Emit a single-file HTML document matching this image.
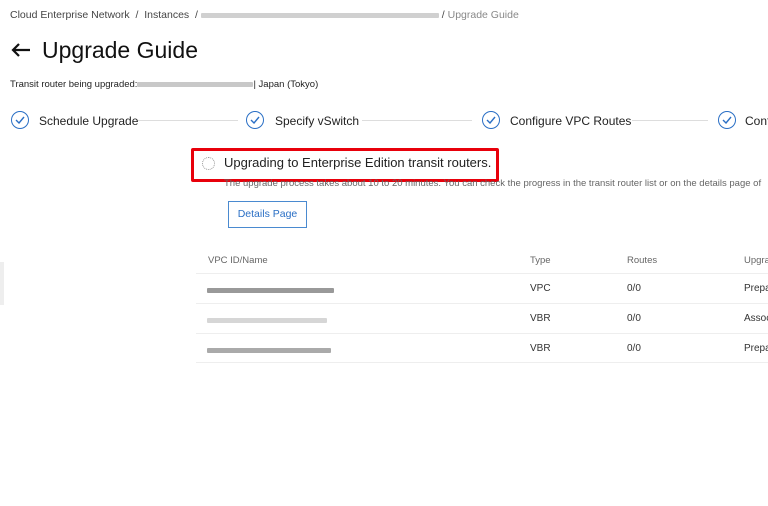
<!DOCTYPE html>
<html><head><style>
body{margin:0;width:768px;height:506px;background:#fff;font-family:"Liberation Sans",sans-serif;color:#333;position:relative;overflow:hidden}
.a{position:absolute;white-space:nowrap}
.b{display:inline-block;height:5px;background:#c8c8c8;vertical-align:middle;border-radius:1px}
.c{position:absolute;width:16px;height:16px;border:1.5px solid #2a6fc5;border-radius:50%;top:111px}
.c svg{position:absolute;left:3px;top:4px}
.ln{position:absolute;height:1px;background:#ddd;top:120px}
.row{position:absolute;left:196px;width:572px;height:1px;background:#eee}
</style></head><body>
<div class="a" style="left:10px;top:9px;font-size:10.5px;color:#444">Cloud Enterprise Network &nbsp;/&nbsp; Instances &nbsp;/ <span class="b" style="width:238px;background:#d0d0d0"></span> / <span style="color:#888">Upgrade Guide</span></div>
<svg class="a" style="left:10px;top:42px" width="22" height="16" viewBox="0 0 22 16"><path d="M20 8H3M9 2L3 8l6 6" stroke="#111" stroke-width="2.2" fill="none"/></svg>
<div class="a" style="left:42px;top:37px;font-size:23px;color:#111">Upgrade Guide</div>
<div class="a" style="left:10px;top:79px;font-size:9.5px;color:#222">Transit router being upgraded:<span class="b" style="width:116px"></span>| Japan (Tokyo)</div>
<div class="c" style="left:11px"><svg width="10" height="8"><path d="M1 4l3 3 5-6" stroke="#2a6fc5" stroke-width="1.4" fill="none"/></svg></div>
<div class="a" style="left:39px;top:114px;font-size:12px;color:#222">Schedule Upgrade</div>
<div class="ln" style="left:138px;width:100px"></div>
<div class="c" style="left:246px"><svg width="10" height="8"><path d="M1 4l3 3 5-6" stroke="#2a6fc5" stroke-width="1.4" fill="none"/></svg></div>
<div class="a" style="left:275px;top:114px;font-size:12px;color:#222">Specify vSwitch</div>
<div class="ln" style="left:362px;width:110px"></div>
<div class="c" style="left:482px"><svg width="10" height="8"><path d="M1 4l3 3 5-6" stroke="#2a6fc5" stroke-width="1.4" fill="none"/></svg></div>
<div class="a" style="left:510px;top:114px;font-size:12px;color:#222">Configure VPC Routes</div>
<div class="ln" style="left:632px;width:76px"></div>
<div class="c" style="left:718px"><svg width="10" height="8"><path d="M1 4l3 3 5-6" stroke="#2a6fc5" stroke-width="1.4" fill="none"/></svg></div>
<div class="a" style="left:745px;top:114px;font-size:12px;color:#222">Confirm</div>
<div class="a" style="left:191px;top:148px;width:302px;height:28px;border:3px solid #e8000b;border-radius:2px"></div>
<div class="a" style="left:202px;top:157px;width:11px;height:11px;border:1.5px dotted #999;border-radius:50%"></div>
<div class="a" style="left:224px;top:155px;font-size:13px;color:#222">Upgrading to Enterprise Edition transit routers.</div>
<div class="a" style="left:224px;top:178px;font-size:9.5px;color:#666">The upgrade process takes about 10 to 20 minutes. You can check the progress in the transit router list or on the details page of</div>
<div class="a" style="left:228px;top:201px;width:77px;height:25px;border:1px solid #4a8ad0;font-size:10.5px;color:#2a6fc5;text-align:center;line-height:25px">Details Page</div>
<div class="a" style="left:0;top:262px;width:4px;height:43px;background:#eee"></div>
<div class="a" style="left:208px;top:255px;font-size:9.5px;color:#666">VPC ID/Name</div>
<div class="a" style="left:530px;top:255px;font-size:9.5px;color:#666">Type</div>
<div class="a" style="left:627px;top:255px;font-size:9.5px;color:#666">Routes</div>
<div class="a" style="left:744px;top:255px;font-size:9.5px;color:#666">Upgrade</div>
<div class="row" style="top:273px"></div>
<div class="a" style="left:207px;top:282px"><span class="b" style="width:127px;background:#999"></span></div>
<div class="a" style="left:530px;top:283px;font-size:10px">VPC</div><div class="a" style="left:627px;top:283px;font-size:10px">0/0</div><div class="a" style="left:744px;top:283px;font-size:10px">Prepa</div>
<div class="row" style="top:303px"></div>
<div class="a" style="left:207px;top:312px"><span class="b" style="width:120px;background:#d6d6d6"></span></div>
<div class="a" style="left:530px;top:313px;font-size:10px">VBR</div><div class="a" style="left:627px;top:313px;font-size:10px">0/0</div><div class="a" style="left:744px;top:313px;font-size:10px">Assoc</div>
<div class="row" style="top:333px"></div>
<div class="a" style="left:207px;top:342px"><span class="b" style="width:124px;background:#aaa"></span></div>
<div class="a" style="left:530px;top:343px;font-size:10px">VBR</div><div class="a" style="left:627px;top:343px;font-size:10px">0/0</div><div class="a" style="left:744px;top:343px;font-size:10px">Prepa</div>
<div class="row" style="top:362px"></div>
</body></html>
